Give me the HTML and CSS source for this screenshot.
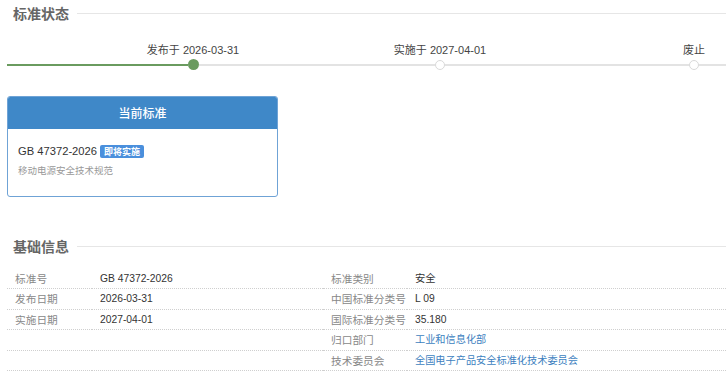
FILE: index.html
```html
<!DOCTYPE html>
<html lang="zh-CN">
<head>
<meta charset="utf-8">
<title>标准状态</title>
<link rel="stylesheet" href="styles.css">
</head>
<body>
<div class="page">
  <div class="section-title"><span>标准状态</span></div>

  <div class="tl-labels">
    <div class="tl-label l1">发布于 2026-03-31</div>
    <div class="tl-label l2">实施于 2027-04-01</div>
    <div class="tl-label l3">废止</div>
  </div>
  <div class="tl-track">
    <div class="seg done s1"></div>
    <div class="dot done"></div>
    <div class="seg s2"></div>
    <div class="dot"></div>
    <div class="seg s3"></div>
    <div class="dot"></div>
    <div class="seg s4"></div>
  </div>

  <div class="card">
    <div class="card-head">当前标准</div>
    <div class="card-body">
      <div class="card-code">GB 47372-2026 <span class="badge">即将实施</span></div>
      <div class="card-sub">移动电源安全技术规范</div>
    </div>
  </div>

  <div class="section-title second"><span>基础信息</span></div>

  <table class="info">
    <colgroup>
      <col class="c1"><col class="c2"><col class="c3"><col class="c4">
    </colgroup>
    <tr><td class="lbl">标准号</td><td class="val">GB 47372-2026</td><td class="lbl">标准类别</td><td class="val">安全</td></tr>
    <tr><td class="lbl">发布日期</td><td class="val">2026-03-31</td><td class="lbl">中国标准分类号</td><td class="val">L 09</td></tr>
    <tr><td class="lbl">实施日期</td><td class="val">2027-04-01</td><td class="lbl">国际标准分类号</td><td class="val">35.180</td></tr>
    <tr><td class="lbl"></td><td class="val"></td><td class="lbl">归口部门</td><td class="val"><a class="link">工业和信息化部</a></td></tr>
    <tr><td class="lbl"></td><td class="val"></td><td class="lbl">技术委员会</td><td class="val"><a class="link">全国电子产品安全标准化技术委员会</a></td></tr>
  </table>
</div>
</body>
</html>
```

FILE: styles.css
```css
html, body {
  margin: 0;
  padding: 0;
  background: #fff;
  overflow: hidden;
}
body {
  font-family: "Liberation Sans", "Noto Sans CJK SC", sans-serif;
  color: #333;
}
.page {
  padding-left: 7px;
  width: 719px;
}
.section-title {
  display: flex;
  align-items: center;
  gap: 8px;
  height: 26px;
  padding-left: 6px;
  font-family: "Noto Sans CJK SC", sans-serif;
  font-size: 14px;
  font-weight: bold;
  color: #666;
}
.section-title::after {
  content: "";
  flex: 1;
  height: 1px;
  background: #e6e6e6;
}
.section-title.second {
  margin-top: 36px;
}

/* timeline */
.tl-labels {
  display: flex;
  margin-top: 17px;
  height: 14px;
  line-height: 14px;
  font-size: 11px;
  color: #444;
}
.tl-label {
  text-align: center;
  white-space: nowrap;
}
.l1 { width: 120px; margin-left: 126px; }
.l2 { width: 120px; margin-left: 127px; }
.l3 { width: 60px; margin-left: 164px; }

.tl-track {
  display: flex;
  align-items: center;
  height: 11px;
  margin-top: 2px;
}
.seg {
  height: 2px;
  background: #e3e3e3;
}
.seg.done { background: #6a9b5f; }
.s1 { width: 181px; }
.s2 { width: 236px; }
.s3 { width: 244px; }
.s4 { flex: 1; }
.dot {
  width: 10px;
  height: 10px;
  box-sizing: border-box;
  border-radius: 50%;
  background: #fff;
  border: 1.5px solid #d9d9d9;
}
.dot.done {
  width: 11px;
  height: 11px;
  background: #6a9b5f;
  border: none;
}

/* card */
.card {
  margin-top: 26px;
  width: 271px;
  box-sizing: border-box;
  border: 1px solid #6fa3d6;
  border-radius: 3px;
  overflow: hidden;
}
.card-head {
  height: 32px;
  line-height: 32px;
  background: #3f88c8;
  color: #fff;
  text-align: center;
  font-size: 12px;
  font-weight: 500;
  font-family: "Noto Sans CJK SC", sans-serif;
}
.card-body {
  padding: 14px 10px 19px 10px;
}
.card-code {
  display: flex;
  align-items: center;
  gap: 3px;
  font-size: 11.2px;
  line-height: 16px;
  color: #333;
}
.badge {
  display: inline-block;
  height: 13px;
  line-height: 13px;
  width: 44px;
  box-sizing: border-box;
  text-align: center;
  background: #4a8fdc;
  color: #fff;
  font-size: 9px;
  font-weight: bold;
  border-radius: 2px;
  font-family: "Noto Sans CJK SC", sans-serif;
}
.card-sub {
  margin-top: 4px;
  font-size: 9.5px;
  line-height: 14px;
  color: #999;
  font-family: "Noto Sans CJK SC", sans-serif;
}

/* info table */
.info {
  margin-top: 10px;
  width: 719px;
  border-collapse: collapse;
  table-layout: fixed;
  font-size: 10.3px;
}
.c1 { width: 85px; }
.c2 { width: 231px; }
.c3 { width: 84px; }
.c4 { width: 319px; }
.info td {
  height: 19.4px;
  padding: 0 0 0 8px;
  border-bottom: 1px dotted #cfcfcf;
  white-space: nowrap;
  line-height: 19.4px;
}
.info td.lbl {
  color: #888;
  font-size: 10.7px;
  font-family: "Noto Sans CJK SC", sans-serif;
}
.info td.val {
  color: #333;
}
.link {
  color: #3d7fc0;
  font-size: 10.2px;
  text-decoration: none;
}
```
